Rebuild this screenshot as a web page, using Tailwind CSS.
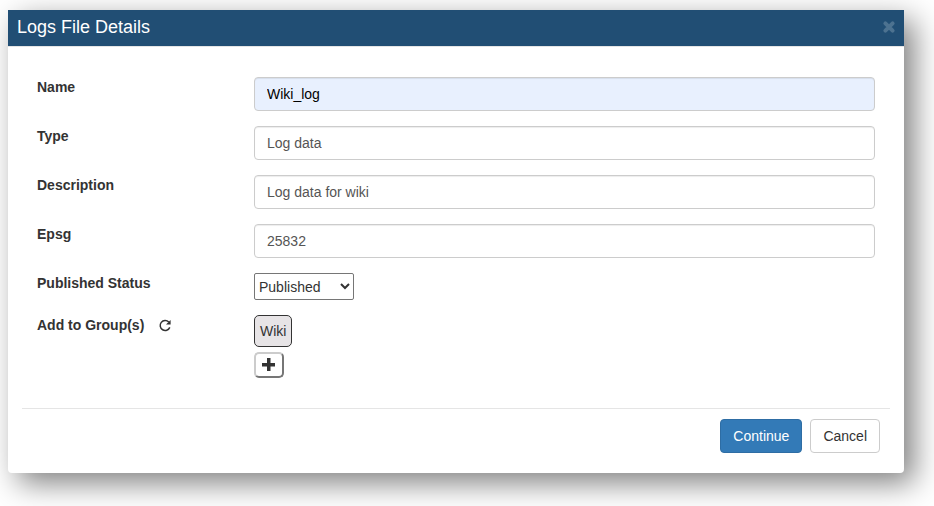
<!DOCTYPE html>
<html lang="en">

<head>
    <meta charset="UTF-8">
    <meta name="viewport" content="width=device-width, initial-scale=1.0">
    <title>Logs File Details</title>
    <script src="https://cdn.jsdelivr.net/npm/@tailwindcss/browser@4"></script>
</head>

<body class="min-h-screen bg-white pt-[10px] pr-[30px] pb-8 pl-2 font-['Liberation_Sans',Arial,sans-serif] text-sm text-[#333]">
    <!-- Dialog -->
    <div role="dialog" aria-labelledby="dialog-title" class="rounded-b bg-white shadow-[10px_10px_30px_rgba(0,0,0,0.5)]">
        <!-- Header -->
        <div class="flex h-[37px] items-center justify-between border-b border-[#e5e5e5] bg-[#214e74] pr-2 pb-[2px] pl-[9px]">
            <h4 id="dialog-title" class="text-lg text-white">Logs File Details</h4>
            <button type="button" aria-label="Close" class="text-[#4d7290]">
                <svg class="size-[14px]" viewBox="0 0 14 14" fill="none" stroke="currentColor" stroke-width="4" stroke-linecap="round">
                    <path d="M3.4 3.4l7.2 7.2M10.6 3.4l-7.2 7.2" />
                </svg>
            </button>
        </div>

        <form>
            <!-- Fields -->
            <div class="flex flex-col gap-[15px] px-[29px] py-[30px]">
                <div class="flex items-start">
                    <label for="name" class="w-[217px] shrink-0 font-bold">Name</label>
                    <input id="name" type="text" value="Wiki_log" class="h-[34px] min-w-0 grow rounded border border-[#ccc] bg-[#e8f0fe] px-3 text-black inset-shadow-[0_1px_1px_rgba(0,0,0,0.075)]">
                </div>
                <div class="flex items-start">
                    <label for="type" class="w-[217px] shrink-0 font-bold">Type</label>
                    <input id="type" type="text" value="Log data" class="h-[34px] min-w-0 grow rounded border border-[#ccc] px-3 text-[#555] inset-shadow-[0_1px_1px_rgba(0,0,0,0.075)]">
                </div>
                <div class="flex items-start">
                    <label for="description" class="w-[217px] shrink-0 font-bold">Description</label>
                    <input id="description" type="text" value="Log data for wiki" class="h-[34px] min-w-0 grow rounded border border-[#ccc] px-3 text-[#555] inset-shadow-[0_1px_1px_rgba(0,0,0,0.075)]">
                </div>
                <div class="flex items-start">
                    <label for="epsg" class="w-[217px] shrink-0 font-bold">Epsg</label>
                    <input id="epsg" type="text" value="25832" class="h-[34px] min-w-0 grow rounded border border-[#ccc] px-3 text-[#555] inset-shadow-[0_1px_1px_rgba(0,0,0,0.075)]">
                </div>
                <div class="flex items-start">
                    <label for="status" class="w-[217px] shrink-0 font-bold">Published Status</label>
                    <select id="status" class="h-[27px] w-[100px] rounded-[2px] border border-[#767676] bg-white">
                        <option selected>Published</option>
                        <option>Unpublished</option>
                    </select>
                </div>
                <div class="flex items-start">
                    <div class="flex w-[217px] shrink-0 items-center gap-[14px]">
                        <span id="groups-label" class="font-bold">Add to Group(s)</span>
                        <button type="button" aria-label="Refresh groups">
                            <svg class="size-[14px]" viewBox="0 0 14 14" fill="none" stroke="currentColor" stroke-width="1.5">
                                <path d="M11.8 9.4A5 5 0 1 1 10.8 4" />
                                <path d="M12.6 2v4.6H8z" fill="currentColor" stroke="none" />
                            </svg>
                        </button>
                    </div>
                    <div role="group" aria-labelledby="groups-label" class="flex flex-col items-start gap-[5px]">
                        <button type="button" class="h-8 rounded-[5px] border border-[#333] bg-[#e7e4e6] px-[5px]">Wiki</button>
                        <button type="button" aria-label="Add group" class="flex h-[26px] w-[30px] items-center justify-center rounded-[5px] border-2 border-t-[#ccc] border-r-[#767676] border-b-[#767676] border-l-[#ccc] bg-white">
                            <svg class="size-[14px]" viewBox="0 0 14 14" fill="currentColor">
                                <path d="M5 0h3.500v5H13v3.500H8.500V13H5V8.500H0V5h5z" />
                            </svg>
                        </button>
                    </div>
                </div>
            </div>

            <!-- Actions -->
            <div class="mx-[14px] flex justify-end gap-2 border-t border-[#e5e5e5] px-[10px] pt-[10px] pb-5">
                <button type="submit" class="h-[34px] rounded border border-[#2e6da4] bg-[#337ab7] px-3 text-white">Continue</button>
                <button type="button" class="h-[34px] rounded border border-[#ccc] bg-white px-3">Cancel</button>
            </div>
        </form>
    </div>
</body>

</html>
